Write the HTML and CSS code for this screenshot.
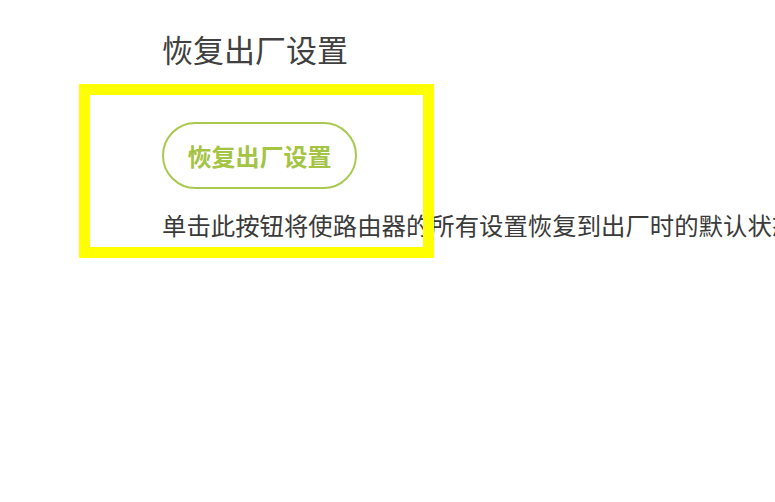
FILE: index.html
```html
<!DOCTYPE html>
<html lang="zh-CN">
<head>
<meta charset="utf-8">
<title>恢复出厂设置</title>
<link rel="stylesheet" href="styles.css">
</head>
<body>
<main class="page">
  <h1 class="title">恢复出厂设置</h1>
  <button class="reset-btn" type="button">恢复出厂设置</button>
  <p class="desc">单击此按钮将使路由器的所有设置恢复到出厂时的默认状态</p>
</main>
<div class="highlight" aria-hidden="true"></div>
</body>
</html>
```

FILE: styles.css
```css
html, body {
  margin: 0;
  padding: 0;
  background: #ffffff;
  overflow: hidden;
  width: 775px;
  height: 502px;
}

body {
  position: relative;
  font-family: "Noto Sans CJK SC", "Noto Sans", sans-serif;
  color: #3a3a3a;
}

.page {
  padding: 29px 0 0 162px;
  display: flex;
  flex-direction: column;
  align-items: flex-start;
}

.title {
  margin: 0;
  font-size: 31px;
  font-weight: 400;
  line-height: 40px;
  color: #404040;
  white-space: nowrap;
}

.reset-btn {
  margin-top: 53px;
  width: 195px;
  height: 67px;
  border: 2.5px solid #a9c94f;
  border-radius: 34px;
  background: #ffffff;
  color: #a4c443;
  font-family: "Noto Sans CJK SC", "Noto Sans", sans-serif;
  font-size: 24px;
  font-weight: 700;
  padding: 0;
  cursor: pointer;
}

.desc {
  margin: 20px 0 0;
  font-size: 24.4px;
  line-height: 32px;
  color: #3a3a3a;
  white-space: nowrap;
}

.highlight {
  position: absolute;
  left: 79px;
  top: 84px;
  width: 333px;
  height: 152px;
  border: 11px solid #ffff00;
  pointer-events: none;
}
```
